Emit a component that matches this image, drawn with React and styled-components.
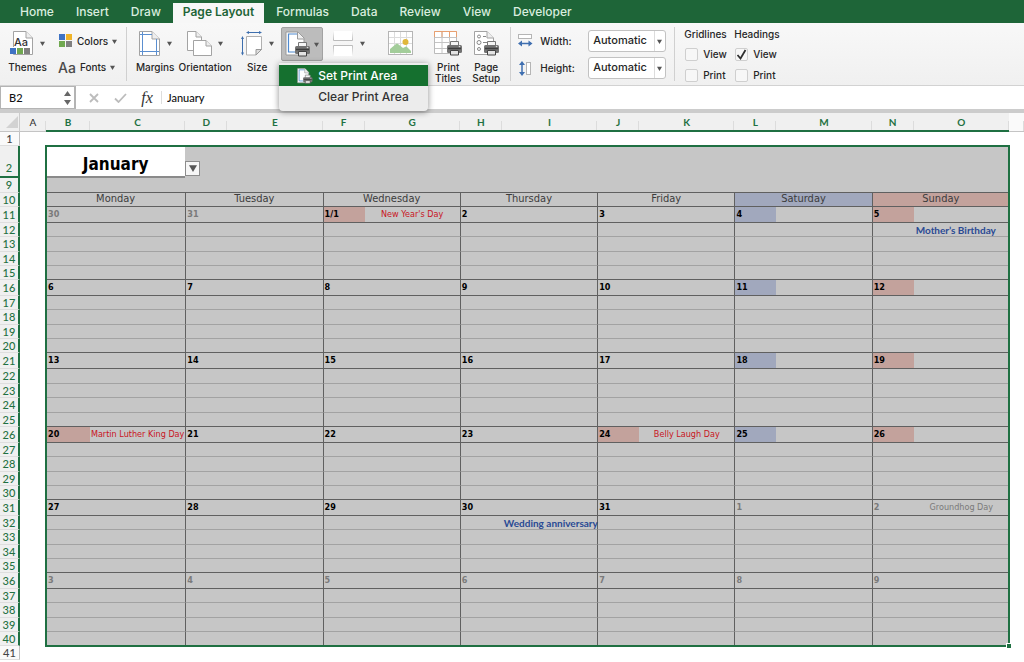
import React, {useState} from 'react'
import styled, { createGlobalStyle, css } from "styled-components"

const GlobalStyle = createGlobalStyle`
    body{
        margin: 0;
        background-color: #ffffff;
        font-family: Inter, sans-serif;
        color: #262626;
    }
    button, input, select{
        font-family: inherit;
        color: inherit;
        margin: 0;
    }
    svg{
        display: block;
        flex: none;
    }
`

const Container = styled.div`
    display: flex;
    flex-direction: column;
    min-height: 100vh;
    box-sizing: border-box;
    overflow: hidden;
`

/* tabs */

const TabBar = styled.nav`
    display: flex;
    align-items: flex-end;
    height: 23px;
    padding-left: 9px;
    background-color: #1e6538;
`

const Tab = styled.button`
    height: 23px;
    padding: 0 11px;
    border: 0;
    background: none;
    color: #d9eddf;
    font-size: 12px;
    font-weight: 500;
    white-space: nowrap;
    cursor: pointer;
    ${props => props.$active && css`
        height: 20px;
        margin: 0 1px;
        padding: 0 10px 3px;
        background-color: #f7f7f7;
        color: #1e6538;
        font-weight: 600;
    `}
`

/* ribbon */

const Ribbon = styled.div`
    display: flex;
    height: 62px;
    border-bottom: 1px solid #d2d2d2;
    background: linear-gradient(#f8f8f8, #f0f0f0);
    font-size: 10px;
    font-weight: 500;
`

const Group = styled.div`
    display: flex;
    align-items: flex-start;
    gap: ${props => props.$gap || 0}px;
    margin: 4px 0;
    padding: 0 ${props => props.$right || 8}px 0 ${props => props.$left || 8}px;
    border-right: ${props => props.$last ? '0' : '1px solid #d0d0d0'};
    box-sizing: border-box;
`

const Tool = styled.button`
    display: flex;
    flex-direction: column;
    align-items: center;
    width: ${props => props.$width}px;
    padding: 0;
    border: 0;
    background: none;
    font-size: 10px;
    font-weight: 500;
    line-height: 11px;
    cursor: pointer;
`

const ToolIcon = styled.span`
    display: flex;
    align-items: center;
    gap: 6px;
    height: 32px;
    margin-bottom: 3px;
`

const PressedTool = styled.button`
    display: flex;
    align-items: center;
    justify-content: center;
    gap: 3px;
    width: 42px;
    height: 34px;
    padding: 0;
    border: 1px solid #a2a2a2;
    border-radius: 2px;
    background-color: #bcbcbc;
    cursor: pointer;
`

const ToolStack = styled.div`
    display: flex;
    flex-direction: column;
    gap: 6px;
    padding-top: 4px;
`

const SmallTool = styled.button`
    display: flex;
    align-items: center;
    gap: 4px;
    height: 20px;
    padding: 0;
    border: 0;
    background: none;
    font-size: 10px;
    font-weight: 500;
    cursor: pointer;
`

const BigLetters = styled.span`
    font-size: 14px;
    font-weight: 500;
    color: #4a4a4a;
`

const MenuAnchor = styled.div`
    position: relative;
    margin-left: 3px;
`

const Menu = styled.div`
    position: absolute;
    z-index: 5;
    top: 36px;
    left: -2px;
    width: 149px;
    padding: 2px 0 4px;
    border-radius: 0 0 4px 4px;
    background-color: #ececec;
    box-shadow: 0 1px 6px rgba(0, 0, 0, 0.45);
    box-sizing: border-box;
`

const MenuItem = styled.button`
    display: grid;
    grid-template-columns: 18px 1fr;
    align-items: center;
    column-gap: 3px;
    width: 100%;
    height: 21px;
    padding: 0 0 0 18px;
    border: 0;
    background-color: ${props => props.$active ? '#15702f' : 'transparent'};
    color: ${props => props.$active ? '#ffffff' : '#333333'};
    font-size: 12px;
    font-weight: 500;
    text-align: left;
    white-space: nowrap;
`

const ScaleGrid = styled.div`
    display: grid;
    grid-template-columns: 16px 42px 78px;
    grid-template-rows: 22px 22px;
    align-items: center;
    column-gap: 6px;
    row-gap: 5px;
    padding-top: 3px;
`

const SelectBox = styled.div`
    position: relative;
    svg{
        position: absolute;
        top: 9px;
        right: 4px;
        pointer-events: none;
    }
`

const Select = styled.select`
    appearance: none;
    width: 100%;
    height: 22px;
    padding: 0 4px 2px;
    border: 1px solid #c2c2c2;
    border-radius: 3px;
    background: linear-gradient(90deg, transparent 65px, #dcdcdc 65px, #dcdcdc 66px, transparent 66px) #ffffff;
    font-size: 11px;
    font-weight: 500;
    outline: 0;
`

const CheckGroup = styled.fieldset`
    display: flex;
    flex-direction: column;
    gap: 7px;
    min-width: 0;
    width: 50px;
    margin: 0;
    padding: 0;
    border: 0;
    legend{
        padding: 0;
        line-height: 14px;
        margin-bottom: 6px;
        white-space: nowrap;
    }
`

const CheckLabel = styled.label`
    display: flex;
    align-items: center;
    gap: 5px;
    height: 14px;
    padding-left: 1px;
`

const Checkbox = styled.input`
    appearance: none;
    width: 13px;
    height: 13px;
    margin: 0;
    border: 1px solid #cfcfcf;
    border-radius: 2px;
    background-color: #f7f7f7;
    &:checked{
        background: #f7f7f7 url("data:image/svg+xml,%3Csvg xmlns='http://www.w3.org/2000/svg' viewBox='0 0 11 11'%3E%3Cpath d='M1.500 6l3 3.500L9.500 1' fill='none' stroke='%23303030' stroke-width='1.800'/%3E%3C/svg%3E") center / 11px;
    }
`

/* formula bar */

const FormulaBar = styled.div`
    display: flex;
    align-items: center;
    height: 23px;
    border-bottom: 4px solid #cccccc;
    background-color: #ffffff;
    font-family: Lato, sans-serif;
`

const NameBox = styled.div`
    display: flex;
    align-items: center;
    justify-content: space-between;
    width: 76px;
    height: 23px;
    padding: 0 3px 0 8px;
    border: 1px solid #b4b4b4;
    border-right-width: 2px;
    box-sizing: border-box;
`

const BarInput = styled.input`
    flex: 1;
    min-width: 0;
    padding: 0;
    border: 0;
    background: none;
    font-size: ${props => props.$size}px;
    font-weight: 500;
    color: #111111;
    outline: 0;
`

const BarButton = styled.button`
    display: flex;
    align-items: center;
    justify-content: center;
    width: 26px;
    height: 20px;
    padding: 0;
    border: 0;
    background: none;
    &:first-of-type{margin-left: 5px}
`

const FxButton = styled(BarButton)`
    font-family: "Liberation Serif", serif;
    font-size: 16px;
    font-style: italic;
    color: #333333;
    width: 28px;
`

const BarLine = styled.span`
    width: 1px;
    height: 13px;
    margin-right: 5px;
    background-color: #dddddd;
`

/* sheet */

const SheetArea = styled.div`
    position: relative;
    flex: 1;
`

const Sheet = styled.table`
    width: 100%;
    table-layout: fixed;
    border-collapse: separate;
    border-spacing: 0;
    th, td{
        padding: 0;
        box-sizing: border-box;
        white-space: nowrap;
    }
`

const Row = styled.tr`
    height: ${props => props.$height}px;
`

const ColHead = styled.th`
    height: 19px;
    font-family: Lato, sans-serif;
    font-size: 10px;
    line-height: 12px;
    font-weight: ${props => props.$selected ? 700 : 500};
    color: ${props => props.$selected ? '#1f7042' : '#333333'};
    background: linear-gradient(transparent 8px, #dcdcdc 8px) right top / 1px 100% no-repeat ${props => props.$blank ? '#fafafa' : '#f0f0f0'};
    border-bottom: ${props => props.$selected ? '2px solid #1f7042' : '1px solid #c4c4c4'};
`

const Corner = styled(ColHead)`
    background: #f0f0f0;
    border-right: 1px solid #cccccc;
    svg{
        margin-left: auto;
    }
`

const RowHead = styled.th`
    font-family: Lato, sans-serif;
    font-size: 11px;
    line-height: 12px;
    font-weight: 500;
    color: ${props => props.$selected ? '#1f7042' : '#444444'};
    background-color: ${props => props.$selected ? '#f0f0f0' : '#fafafa'};
    vertical-align: ${props => props.$folded ? 'bottom' : 'middle'};
    border-right: ${props => props.$selected ? '2px solid #1f7042' : '1px solid #c0c0c0'};
    border-bottom: ${props => props.$folded ? '2px solid #1f7042' : '1px solid #dedede'};
    && {padding-bottom: ${props => props.$folded ? 2 : 0}px}
`

const Cell = styled.td`
    background-color: #c6c6c6;
    border-bottom: 1px solid ${props => props.$line || '#a2a2a2'};
    border-left: ${props => props.$edge ? '1px solid #606060' : '0'};
    overflow: visible;
`

const PlainCell = styled(Cell)`
    border: 0;
`

const MonthCell = styled.td`
    background-color: #ffffff;
    border-bottom: 2px solid #8a8a8a;
    font-family: "DejaVu Sans Condensed", "DejaVu Sans", sans-serif;
    font-size: 17px;
    line-height: 20px;
    font-weight: 700;
    color: #000000;
    text-align: center;
    vertical-align: middle;
    && {padding-top: 6px}
`

const DropButton = styled.button`
    display: flex;
    align-items: center;
    justify-content: center;
    width: 15px;
    height: 15px;
    margin-top: 12px;
    padding: 0;
    border: 1px solid #8c8c8c;
    background-color: #f6f6f6;
`

const weekendFill = {
    sat: '#a1a8bd',
    sun: '#c3a29c',
}

const DayName = styled(Cell)`
    background-color: ${props => weekendFill[props.$fill] || '#c6c6c6'};
    border-bottom-color: #606060;
    font-family: "DejaVu Sans Condensed", "DejaVu Sans", sans-serif;
    font-size: 11px;
    line-height: 11px;
    color: #3c3c3c;
    text-align: center;
    vertical-align: top;
`

const DateCell = styled(Cell)`
    background-color: ${props => weekendFill[props.$fill] || '#c6c6c6'};
    font-family: "DejaVu Sans Condensed", "DejaVu Sans", sans-serif;
    font-size: 9px;
    line-height: 14px;
    font-weight: 700;
    color: ${props => props.$faded ? '#7a7a7a' : '#000000'};
    vertical-align: top;
    && {padding-left: ${props => props.$edge ? 1 : 2}px}
`

const Holiday = styled(Cell)`
    font-family: "DejaVu Sans Condensed", "DejaVu Sans", sans-serif;
    font-size: 9px;
    line-height: 14px;
    color: ${props => props.$faded ? '#7a7a7a' : '#c8141e'};
    text-align: center;
    vertical-align: top;
`

const EventCell = styled(Cell)`
    font-family: Lato, sans-serif;
    font-size: 10px;
    line-height: 12px;
    font-weight: 700;
    color: #2a4a94;
    && {padding-left: 2px}
`

const Selection = styled.div`
    position: absolute;
    top: 32px;
    left: 45px;
    right: 14px;
    height: 502px;
    border: 2px solid #1f7042;
    box-sizing: border-box;
    pointer-events: none;
    &::after{
        content: "";
        position: absolute;
        right: -4px;
        bottom: -4px;
        width: 4px;
        height: 4px;
        border: 1px solid #ffffff;
        background-color: #1f7042;
    }
`

const tabs = ["Home", "Insert", "Draw", "Page Layout", "Formulas", "Data", "Review", "View", "Developer"];
const dayNames = ["Monday", "Tuesday", "Wednesday", "Thursday", "Friday", "Saturday", "Sunday"];
const columns = ["B", "C", "D", "E", "F", "G", "H", "I", "J", "K", "L", "M", "N", "O"];

const weeks = [
    { first: 11, heights: [16, 14, 15, 14, 14], days: ["30", "31", "1/1", "2", "3", "4", "5"] },
    { first: 16, heights: [16, 14, 15, 14, 14], days: ["6", "7", "8", "9", "10", "11", "12"] },
    { first: 21, heights: [16, 15, 14, 15, 14], days: ["13", "14", "15", "16", "17", "18", "19"] },
    { first: 26, heights: [16, 14, 15, 14, 14], days: ["20", "21", "22", "23", "24", "25", "26"] },
    { first: 31, heights: [16, 14, 15, 14, 14], days: ["27", "28", "29", "30", "31", "1", "2"] },
    { first: 36, heights: [16, 14, 15, 14, 14], days: ["3", "4", "5", "6", "7", "8", "9"] },
];

// keys are "row-day"
const holidays = {
    "11-2": "New Year's Day",
    "26-0": "Martin Luther King Day",
    "26-4": "Belly Laugh Day",
    "31-6": "Groundhog Day",
};
const events = {
    "12-6": "Mother’s Birthday",
    "32-3": "Wedding anniversary",
};

const isFaded = (row, day) => (row === 11 && day < 2) || (row === 31 && day > 4) || row === 36;

const fillFor = (row, day) => {
    if (isFaded(row, day)) return null;
    if (holidays[row + '-' + day] || day === 6) return 'sun';
    return day === 5 ? 'sat' : null;
};

const Caret = ({ size = 5, color = "#555" }) => (
    <svg width={size} height={size} viewBox="0 0 6 6"><path d="M0 1h6L3 6z" fill={color}/></svg>
)

const Page = ({ x = 0, y = 0, w = 17, h = 23, fold = 7 }) => (
    <g transform={`translate(${x} ${y})`} fill="#fff" stroke="#a3a3a3">
        <path d={`M.5 .5H${w - fold}L${w - .5} ${fold}V${h - .5}H.5z`}/>
        <path d={`M${w - fold} .5V${fold}H${w - .5}`} fill="#eee"/>
    </g>
)

const Printer = ({ x, y }) => (
    <g transform={`translate(${x} ${y})`}>
        <path d="M3.500 5V.5h8V5" fill="#f5f5f5" stroke="#777"/>
        <rect x="0" y="4" width="15" height="8" rx="1.500" fill="#737373"/>
        <path d="M1 7.500h13" stroke="#3e3e3e" strokeWidth="1.500"/>
        <circle cx="12.500" cy="5.500" r=".8" fill="#ddd"/>
        <path d="M3.500 9.500h8v4.500h-8z" fill="#e4e4e4" stroke="#444"/>
    </g>
)

const ThemesIcon = () => (
    <svg width="24" height="25" viewBox="0 0 24 25">
        <Page x={3} y={0} w={20} h={24}/>
        <text x="4" y="15" fontSize="11" fontFamily="Inter, sans-serif" fill="#333">Aa</text>
        <rect x="0" y="16" width="21" height="7" fill="#fff"/>
        <rect x="0" y="17" width="6" height="6" fill="#3f73c4"/>
        <rect x="7" y="17" width="6" height="6" fill="#70a850"/>
        <rect x="14" y="17" width="6" height="6" fill="#808080"/>
    </svg>
)

const ColorsIcon = () => (
    <svg width="15" height="14" viewBox="0 0 15 14">
        <rect x="1" width="6" height="6" fill="#3f73c4"/>
        <rect x="8" width="6" height="6" fill="#f0b429"/>
        <rect x="1" y="7" width="6" height="6" fill="#70a850"/>
        <rect x="8" y="7" width="6" height="6" fill="#808080"/>
    </svg>
)

const MarginsIcon = () => (
    <svg width="22" height="25" viewBox="0 0 22 25">
        <Page w={21} h={25} fold={8}/>
        <path d="M3.500 1v23M17.500 8v16M1 3.500h12M1 20.500h19" fill="none" stroke="#5b8fd0"/>
    </svg>
)

const OrientationIcon = () => (
    <svg width="25" height="25" viewBox="0 0 25 25">
        <Page w={15} h={20} fold={6}/>
        <Page x={6} y={9} w={19} h={16} fold={6}/>
    </svg>
)

const SizeIcon = () => (
    <svg width="22" height="25" viewBox="0 0 22 25">
        <path d="M5.500 5.500h15v13l-5.500 5.500h-9.500z" fill="#fff" stroke="#b0b0b0"/>
        <path d="M20.500 18.500h-5.500v5.500z" fill="#ddd" stroke="#999"/>
        <path d="M6 1.500h14M1.500 6v17" stroke="#3e6fae" fill="none"/>
        <path d="M8 0L5 1.500L8 3zM18 0l3 1.500L18 3zM0 8l1.500-3L3 8zM0 21.500l1.500 3l1.500-3z" fill="#3e6fae"/>
    </svg>
)

const PrintAreaIcon = ({ width = 26, height = 26 }) => (
    <svg width={width} height={height} viewBox="0 0 26 26">
        <path d="M1 1h12l6 6v17H1z" fill="#fff" stroke="#999"/>
        <path d="M12.500 3H3.500v18H10" fill="none" stroke="#4f8ad0" strokeWidth="1.200"/>
        <path d="M12.500 1v7H19" fill="#eee" stroke="#999"/>
        <Printer x={10} y={11}/>
    </svg>
)

const BreaksIcon = () => (
    <svg width="21" height="25" viewBox="0 0 21 25">
        <defs>
            <linearGradient id="breakTop" x1="0" y1="0" x2="0" y2="1"><stop offset="0" stopColor="#bbb" stopOpacity="0"/><stop offset="1" stopColor="#bbb"/></linearGradient>
            <linearGradient id="breakBottom" x1="0" y1="1" x2="0" y2="0"><stop offset="0" stopColor="#bbb" stopOpacity="0"/><stop offset="1" stopColor="#bbb"/></linearGradient>
        </defs>
        <path d="M.5 0v9.500h19V0" fill="#fff" stroke="url(#breakTop)"/>
        <path d="M.5 25V14.500h19V25" fill="#fff" stroke="url(#breakBottom)"/>
    </svg>
)

const BackgroundIcon = () => (
    <svg width="25" height="24" viewBox="0 0 25 24">
        <rect x=".5" y=".5" width="24" height="23" fill="#fff" stroke="#b5b5b5"/>
        <path d="M6.500 1v22M12.500 1v22M18.500 1v22M1 6.500h23M1 12.500h23" stroke="#dcdcdc"/>
        <path d="M2 22v-4l6-5q1-1 2 0l5 4 2-1q1-1 2 0l4 4v2z" fill="#a3cd9a"/>
        <circle cx="17.500" cy="11" r="3" fill="#e0b73a"/>
    </svg>
)

const PrintTitlesIcon = () => (
    <svg width="28" height="26" viewBox="0 0 28 26">
        <path d="M.5 1.500h22v22H.5z" fill="#fff" stroke="#bbb"/>
        <path d="M1 7.500h21M1 12.500h21M1 18.500h21M8 2v21M15.500 2v21" stroke="#c4c4c4"/>
        <path d="M.5 7V1.500h22V7M8 2v5M15.500 2v5" fill="none" stroke="#e8a070"/>
        <Printer x={13} y={11}/>
    </svg>
)

const PageSetupIcon = () => (
    <svg width="27" height="26" viewBox="0 0 27 26">
        <Page x={1} y={1} w={20} h={24}/>
        <g fill="none" stroke="#888">
            <circle cx="6" cy="6.500" r="1.500"/>
            <circle cx="6" cy="12.500" r="2"/>
            <circle cx="6" cy="19" r="1.500"/>
            <path d="M10 6.500h3M10 12.500h5"/>
        </g>
        <Printer x={11} y={11}/>
    </svg>
)

const WidthIcon = () => (
    <svg width="15" height="14" viewBox="0 0 15 14">
        <rect x=".5" y=".5" width="13" height="4" fill="#fff" stroke="#b5b5b5"/>
        <path d="M2 9.500h11" stroke="#3f6fb0" strokeWidth="1.500"/>
        <path d="M4 6.500v6L0 9.500zM10.500 6.500v6l4-3z" fill="#3f6fb0"/>
    </svg>
)

const HeightIcon = () => (
    <svg width="15" height="15" viewBox="0 0 15 15">
        <rect x="8.500" y="1.500" width="4" height="12" fill="#fff" stroke="#b5b5b5"/>
        <path d="M4 2v11" stroke="#3f6fb0" strokeWidth="1.500"/>
        <path d="M1 4h6L4 0zM1 11h6l-3 4z" fill="#3f6fb0"/>
    </svg>
)

const CheckColumn = ({ title, checked }) => (
    <CheckGroup>
        <legend>{title}</legend>
        <CheckLabel><Checkbox type="checkbox" defaultChecked={checked}/>View</CheckLabel>
        <CheckLabel><Checkbox type="checkbox"/>Print</CheckLabel>
    </CheckGroup>
)

const ScaleSelect = ({ id }) => (
    <SelectBox>
        <Select id={id} defaultValue="Automatic">
            <option>Automatic</option>
            <option>1 page</option>
            <option>2 pages</option>
        </Select>
        <Caret/>
    </SelectBox>
)

const Week = ({ first, heights, days }) => heights.map((height, i) => {
    const row = first + i;
    const line = i === 0 || i === 4 ? '#606060' : '#a2a2a2';
    return (
        <Row key={row} $height={height}>
            <RowHead scope="row" $selected>{row}</RowHead>
            <td/>
            {days.map((date, day) => {
                const key = row + '-' + day;
                const faded = isFaded(row, day);
                if (i > 0) {
                    return (
                        <React.Fragment key={key}>
                            <Cell $line={line} $edge={day > 0}/>
                            <EventCell $line={line}>{events[key]}</EventCell>
                        </React.Fragment>
                    )
                }
                return (
                    <React.Fragment key={key}>
                        <DateCell $line={line} $edge={day > 0} $faded={faded} $fill={fillFor(row, day)}>{date}</DateCell>
                        <Holiday $line={line} $faded={faded}>{holidays[key]}</Holiday>
                    </React.Fragment>
                )
            })}
            <td/>
        </Row>
    )
})

const App = () => {

    const [activeTab, setActiveTab] = useState('Page Layout');
    const [menuOpen, setMenuOpen] = useState(true);

    return (
        <Container>
            <GlobalStyle/>
            <TabBar>
                {tabs.map((tab) => (
                    <Tab key={tab} $active={tab === activeTab} onClick={() => setActiveTab(tab)}>{tab}</Tab>
                ))}
            </TabBar>

            <Ribbon>
                <Group $gap={12} $left={9} $right={9}>
                    <Tool $width={37}>
                        <ToolIcon><ThemesIcon/><Caret/></ToolIcon>
                        Themes
                    </Tool>
                    <ToolStack>
                        <SmallTool><ColorsIcon/>Colors<Caret/></SmallTool>
                        <SmallTool><BigLetters>Aa</BigLetters>Fonts<Caret/></SmallTool>
                    </ToolStack>
                </Group>

                <Group $left={9} $right={9}>
                    <Tool $width={38}>
                        <ToolIcon><MarginsIcon/><Caret/></ToolIcon>
                        Margins
                    </Tool>
                    <Tool $width={62}>
                        <ToolIcon><OrientationIcon/><Caret/></ToolIcon>
                        Orientation
                    </Tool>
                    <Tool $width={42}>
                        <ToolIcon><SizeIcon/><Caret/></ToolIcon>
                        Size
                    </Tool>
                    <MenuAnchor>
                        <PressedTool aria-label="Print Area" onClick={() => setMenuOpen(!menuOpen)}>
                            <PrintAreaIcon/><Caret/>
                        </PressedTool>
                        {menuOpen && (
                            <Menu>
                                <MenuItem $active><PrintAreaIcon width={16} height={16}/>Set Print Area</MenuItem>
                                <MenuItem><span/>Clear Print Area</MenuItem>
                            </Menu>
                        )}
                    </MenuAnchor>
                    <Tool $width={52} aria-label="Breaks">
                        <ToolIcon><BreaksIcon/><Caret/></ToolIcon>
                    </Tool>
                    <Tool $width={50} aria-label="Background">
                        <ToolIcon><BackgroundIcon/></ToolIcon>
                    </Tool>
                    <Tool $width={46}>
                        <ToolIcon><PrintTitlesIcon/></ToolIcon>
                        Print<br/>Titles
                    </Tool>
                    <Tool $width={30}>
                        <ToolIcon><PageSetupIcon/></ToolIcon>
                        Page<br/>Setup
                    </Tool>
                </Group>

                <Group $left={7} $right={8}>
                    <ScaleGrid>
                        <WidthIcon/><label htmlFor="scale-width">Width:</label><ScaleSelect id="scale-width"/>
                        <HeightIcon/><label htmlFor="scale-height">Height:</label><ScaleSelect id="scale-height"/>
                    </ScaleGrid>
                </Group>

                <Group $left={9} $last>
                    <CheckColumn title="Gridlines"/>
                    <CheckColumn title="Headings" checked/>
                </Group>
            </Ribbon>

            <FormulaBar>
                <NameBox>
                    <BarInput $size={11} aria-label="Name Box" defaultValue="B2"/>
                    <svg width="7" height="14" viewBox="0 0 7 14"><path d="M0 5h7L3.500 0zM0 9h7l-3.500 5z" fill="#666"/></svg>
                </NameBox>
                <BarButton aria-label="Cancel">
                    <svg width="10" height="10" viewBox="0 0 10 10"><path d="M1 1l8 8M9 1L1 9" stroke="#bcbcbc" strokeWidth="1.800"/></svg>
                </BarButton>
                <BarButton aria-label="Enter">
                    <svg width="13" height="10" viewBox="0 0 13 10"><path d="M1 5.500l3.500 3.500L12 1" fill="none" stroke="#bcbcbc" strokeWidth="1.800"/></svg>
                </BarButton>
                <FxButton>fx</FxButton>
                <BarLine/>
                <BarInput $size={11} aria-label="Formula" defaultValue="January"/>
            </FormulaBar>

            <SheetArea>
                <Sheet>
                    <colgroup>
                        <col width="20"/>
                        <col width="26"/>
                        {columns.map((name, i) => <col key={name} width={i === 0 ? 44 : i % 2 ? undefined : 42}/>)}
                        <col width="15"/>
                    </colgroup>
                    <thead>
                        <tr>
                            <Corner><svg width="13" height="13" viewBox="0 0 13 13"><path d="M12 0v12H0z" fill="#d2d2d2"/></svg></Corner>
                            <ColHead scope="col">A</ColHead>
                            {columns.map((name) => <ColHead key={name} scope="col" $selected>{name}</ColHead>)}
                            <ColHead $blank/>
                        </tr>
                    </thead>
                    <tbody>
                        <Row $height={14}>
                            <RowHead scope="row">1</RowHead>
                            <td colSpan={16}/>
                        </Row>
                        <Row $height={32}>
                            <RowHead scope="row" $selected $folded>2</RowHead>
                            <td/>
                            <MonthCell colSpan={2}>January</MonthCell>
                            <PlainCell colSpan={12}>
                                <DropButton aria-label="Choose month"><Caret size={8}/></DropButton>
                            </PlainCell>
                            <td/>
                        </Row>
                        <Row $height={15}>
                            <RowHead scope="row" $selected>9</RowHead>
                            <td/>
                            <Cell colSpan={14} $line="#606060"/>
                            <td/>
                        </Row>
                        <Row $height={14}>
                            <RowHead scope="row" $selected>10</RowHead>
                            <td/>
                            {dayNames.map((name, day) => (
                                <DayName key={name} colSpan={2} $edge={day > 0} $fill={{ 5: 'sat', 6: 'sun' }[day]}>{name}</DayName>
                            ))}
                            <td/>
                        </Row>
                        {weeks.map((week) => <Week key={week.first} {...week}/>)}
                        <Row $height={14}>
                            <RowHead scope="row">41</RowHead>
                            <td colSpan={16}/>
                        </Row>
                    </tbody>
                </Sheet>
                <Selection/>
            </SheetArea>
        </Container>
    )
}

export default App
